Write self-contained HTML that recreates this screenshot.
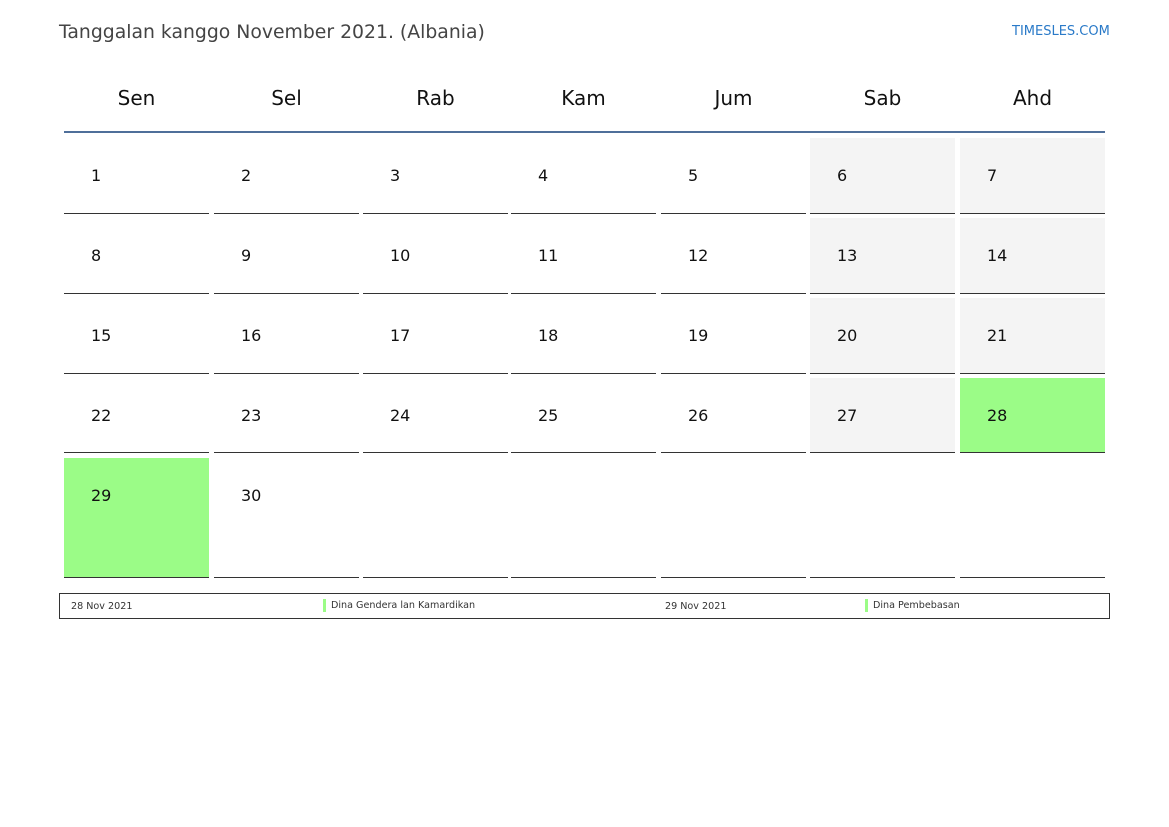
<!DOCTYPE html>
<html><head><meta charset="utf-8"><style>
body{margin:0;width:1169px;height:827px;background:#fff;font-family:"DejaVu Sans","Liberation Sans",sans-serif;position:relative;overflow:hidden}
.a{position:absolute}
.t{left:59px;top:21px;font-size:19px;color:#444;transform:scaleX(0.99);transform-origin:left}
.l{left:1012px;top:24px;font-size:13px;color:#2a7ac8}
.h{font-size:20px;color:#111;width:145px;text-align:center;top:86px}
.c{position:absolute;width:145px;border-bottom:1px solid #333;box-sizing:border-box}
.c span{position:absolute;left:27px;top:28px;font-size:16px;color:#111}
.g{background:#f4f4f4}.gr{background:#9bfc87}
.lg{left:59px;top:593px;width:1051px;height:26px;border:1px solid #333;box-sizing:border-box;font-size:9.6px;color:#333}
.lg div{position:absolute;top:7px}
.bar{border-left:3px solid #9bfc87;padding-left:5px;top:5px!important;line-height:13px}
</style></head><body>
<div class="a t">Tanggalan kanggo November 2021. (Albania)</div>
<div class="a l">TIMESLES.COM</div>
<div class="a h" style="left:64px">Sen</div>
<div class="a h" style="left:214px">Sel</div>
<div class="a h" style="left:363px">Rab</div>
<div class="a h" style="left:511px">Kam</div>
<div class="a h" style="left:661px">Jum</div>
<div class="a h" style="left:810px">Sab</div>
<div class="a h" style="left:960px">Ahd</div>
<div class="a" style="left:64px;top:131px;width:1041px;height:2px;background:#4f6f9a"></div>
<div id="g"></div>
<script>
var xs=[64,214,363,511,661,810,960],ys=[138,218,298,378,458],hs=[76,76,76,75,120];
var h='';
for(var r=0;r<5;r++)for(var c=0;c<7;c++){var d=r*7+c+1;var cls='c';
if(c>=5&&d<=27)cls+=' g';if(d==28||d==29)cls+=' gr';
h+='<div class="'+cls+'" style="left:'+xs[c]+'px;top:'+ys[r]+'px;height:'+hs[r]+'px">'+(d<=30?'<span>'+d+'</span>':'')+'</div>';}
document.getElementById('g').outerHTML=h;
</script>
<div class="a lg">
<div style="left:11px;top:7px">28 Nov 2021</div>
<div class="bar" style="left:263px">Dina Gendera lan Kamardikan</div>
<div style="left:605px;top:7px">29 Nov 2021</div>
<div class="bar" style="left:805px">Dina Pembebasan</div>
</div>
</body></html>
